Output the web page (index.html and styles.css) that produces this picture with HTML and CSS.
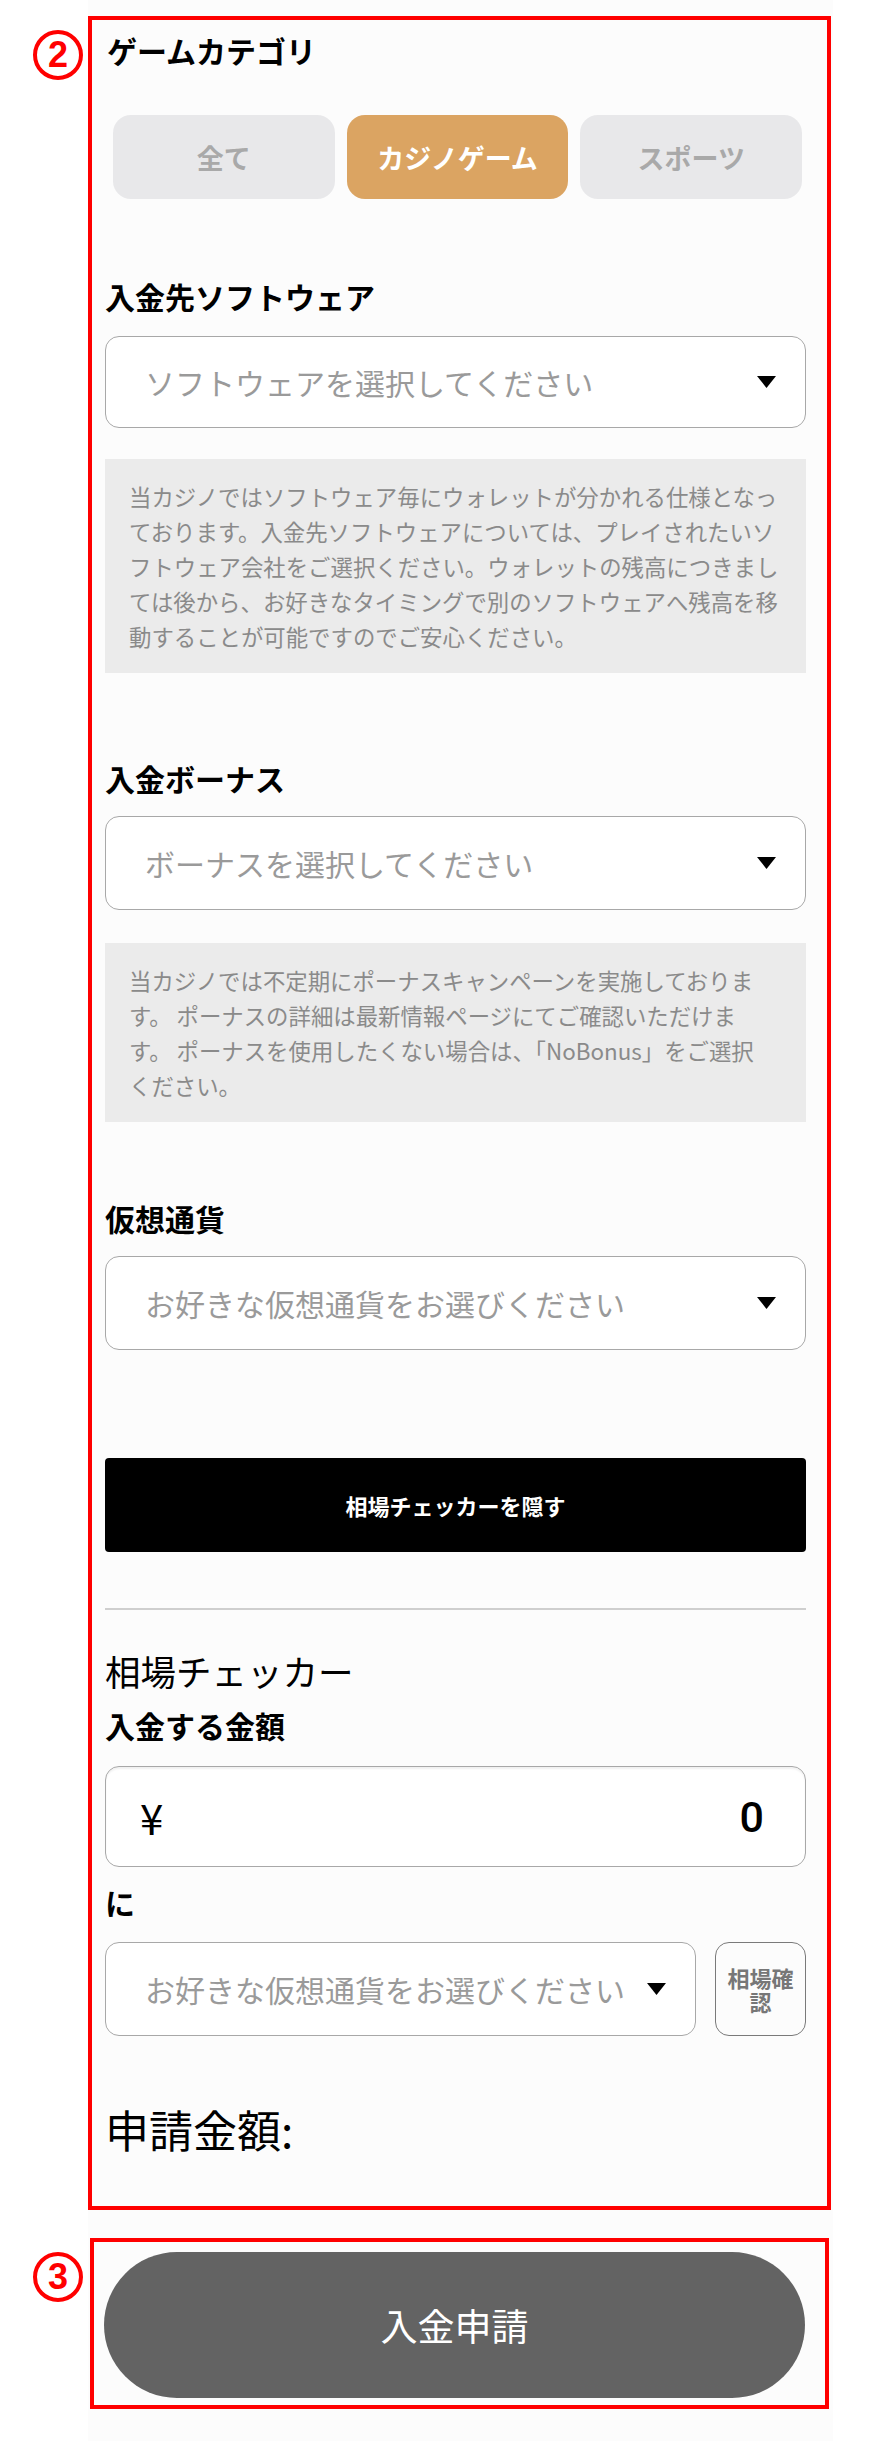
FILE: index.html
```html
<!DOCTYPE html>
<html lang="ja">
<head>
<meta charset="utf-8">
<title>入金申請</title>
<link rel="stylesheet" href="styles.css">
</head>
<body>
<main class="deposit">
  <section class="panel panel-form">
    <span class="step-badge">2</span>
    <h2 class="panel-title">ゲームカテゴリ</h2>
    <div class="category-tabs">
      <div class="tab">全て</div>
      <div class="tab is-active">カジノゲーム</div>
      <div class="tab">スポーツ</div>
    </div>

    <h3 class="field-label label-software">入金先ソフトウェア</h3>
    <div class="select">
      <span class="select-placeholder">ソフトウェアを選択してください</span>
      <svg class="select-arrow" viewBox="0 0 19 12" aria-hidden="true"><polygon points="0,0 19,0 9.5,12"/></svg>
    </div>
    <p class="note note-software">当カジノではソフトウェア毎にウォレットが分かれる仕様となっております。入金先ソフトウェアについては、プレイされたいソフトウェア会社をご選択ください。ウォレットの残高につきましては後から、お好きなタイミングで別のソフトウェアへ残高を移動することが可能ですのでご安心ください。</p>

    <h3 class="field-label label-bonus">入金ボーナス</h3>
    <div class="select">
      <span class="select-placeholder">ボーナスを選択してください</span>
      <svg class="select-arrow" viewBox="0 0 19 12" aria-hidden="true"><polygon points="0,0 19,0 9.5,12"/></svg>
    </div>
    <p class="note note-bonus">当カジノでは不定期にポーナスキャンペーンを実施しておりま<br>す。 ポーナスの詳細は最新情報ページにてご確認いただけま<br>す。 ポーナスを使用したくない場合は、「NoBonus」をご選択<br>ください。</p>

    <h3 class="field-label label-crypto">仮想通貨</h3>
    <div class="select">
      <span class="select-placeholder">お好きな仮想通貨をお選びください</span>
      <svg class="select-arrow" viewBox="0 0 19 12" aria-hidden="true"><polygon points="0,0 19,0 9.5,12"/></svg>
    </div>

    <div class="checker-toggle">相場チェッカーを隠す</div>
    <hr class="divider">

    <h3 class="checker-title">相場チェッカー</h3>
    <h3 class="field-label label-amount">入金する金額</h3>
    <div class="amount-input">
      <span class="amount-currency">¥</span>
      <span class="amount-value">0</span>
    </div>
    <h3 class="field-label label-to">に</h3>
    <div class="rate-row">
      <div class="select">
        <span class="select-placeholder">お好きな仮想通貨をお選びください</span>
        <svg class="select-arrow" viewBox="0 0 19 12" aria-hidden="true"><polygon points="0,0 19,0 9.5,12"/></svg>
      </div>
      <div class="rate-check">相場確認</div>
    </div>

    <p class="request-total">申請金額:</p>
  </section>

  <section class="panel panel-submit">
    <span class="step-badge">3</span>
    <div class="submit-button">入金申請</div>
  </section>
</main>
</body>
</html>
```

FILE: styles.css
```css
html, body {
  margin: 0;
  padding: 0;
  background: #ffffff;
}

body {
  font-family: "Noto Sans CJK JP", "Noto Sans", sans-serif;
  color: #000;
}

.deposit {
  width: 745px;
  margin-left: 88px;
  padding: 16px 0 32px;
  background: #fcfcfc;
}

/* red outlined step panels */
.panel {
  position: relative;
  box-sizing: border-box;
  border: 4px solid #ff0000;
}

.panel-form {
  width: 743px;
  padding: 10px 21px 49px 13px;
}

.panel-submit {
  width: 739px;
  margin: 28px 0 0 2px;
  padding: 10px 20px 7px 10px;
}

.step-badge {
  position: absolute;
  top: 10px;
  left: -59px;
  box-sizing: border-box;
  width: 50px;
  height: 50px;
  border: 4px solid #ff0000;
  border-radius: 50%;
  display: flex;
  align-items: center;
  justify-content: center;
  font-family: "Liberation Sans", Arial, sans-serif;
  font-weight: 700;
  font-size: 36px;
  line-height: 1;
  color: #ff0000;
}

.panel-submit .step-badge {
  top: 10px;
  left: -61px;
}

/* headings */
.panel-title,
.field-label {
  margin: 0;
  font-size: 30px;
  font-weight: 700;
  line-height: 40px;
}

.panel-title {
  margin-left: 2px;
}

.label-software { margin-top: 77px; }
.label-bonus { margin-top: 85px; }
.label-crypto { margin-top: 76px; }
.label-amount { margin-top: 11px; }
.label-to { margin-top: 15px; }

/* category tabs */
.category-tabs {
  display: flex;
  gap: 12px;
  margin-top: 45px;
  padding: 0 4px 0 8px;
}

.tab {
  flex: 1;
  height: 84px;
  border-radius: 18px;
  background: #e8e8ea;
  color: #a9a9a9;
  font-size: 27px;
  font-weight: 700;
  display: flex;
  align-items: center;
  justify-content: center;
}

.tab.is-active {
  background: #dba462;
  color: #ffffff;
}

/* select boxes */
.select {
  box-sizing: border-box;
  height: 94px;
  margin-top: 18px;
  padding: 0 29px 0 39px;
  border: 1px solid #a8a8a8;
  border-radius: 14px;
  background: #ffffff;
  display: flex;
  align-items: center;
  justify-content: space-between;
}

.label-software + .select {
  height: 92px;
  margin-top: 20px;
}

.select-placeholder {
  font-size: 30px;
  color: #9a9a9a;
  white-space: nowrap;
}

.select-arrow {
  width: 19px;
  height: 12px;
  fill: #000;
  flex: none;
}

/* info notes */
.note {
  margin: 0;
  padding: 20px 24px 19px;
  background: #ebebeb;
  color: #8a8a8a;
  font-size: 22.4px;
  line-height: 35px;
}

.note-software { margin-top: 31px; }
.note-bonus { margin-top: 33px; }

/* rate checker */
.checker-toggle {
  height: 94px;
  margin-top: 108px;
  border-radius: 4px;
  background: #000;
  color: #fff;
  font-size: 22px;
  font-weight: 700;
  display: flex;
  align-items: center;
  justify-content: center;
}

.divider {
  margin: 56px 0 0;
  border: 0;
  height: 2px;
  background: #cfcfcf;
}

.checker-title {
  margin: 38px 0 0;
  font-size: 35.5px;
  font-weight: 400;
  line-height: 46px;
}

.amount-input {
  box-sizing: border-box;
  height: 101px;
  margin-top: 21px;
  padding: 0 41px 0 34px;
  border: 1px solid #a8a8a8;
  border-radius: 14px;
  background: #ffffff;
  box-shadow: inset 0 2px 2px rgba(0, 0, 0, 0.06);
  display: flex;
  align-items: center;
  justify-content: space-between;
}

.amount-currency {
  font-size: 42px;
}

.amount-value {
  font-family: "Roboto", "Noto Sans", sans-serif;
  font-size: 43px;
  font-weight: 500;
}

.rate-row {
  display: flex;
  gap: 19px;
  margin-top: 20px;
}

.rate-row .select {
  flex: 1;
  margin-top: 0;
}

.rate-check {
  box-sizing: border-box;
  width: 91px;
  height: 94px;
  padding: 0 6px;
  border: 1.5px solid #7a7a7a;
  border-radius: 14px;
  color: #777;
  font-size: 22px;
  font-weight: 700;
  line-height: 24px;
  text-align: center;
  display: flex;
  align-items: center;
  justify-content: center;
}

.request-total {
  margin: 65px 0 0;
  font-size: 44px;
  line-height: 56px;
}

/* submit */
.submit-button {
  height: 146px;
  border-radius: 73px;
  background: #636363;
  color: #fff;
  font-size: 37px;
  display: flex;
  align-items: center;
  justify-content: center;
}
```
